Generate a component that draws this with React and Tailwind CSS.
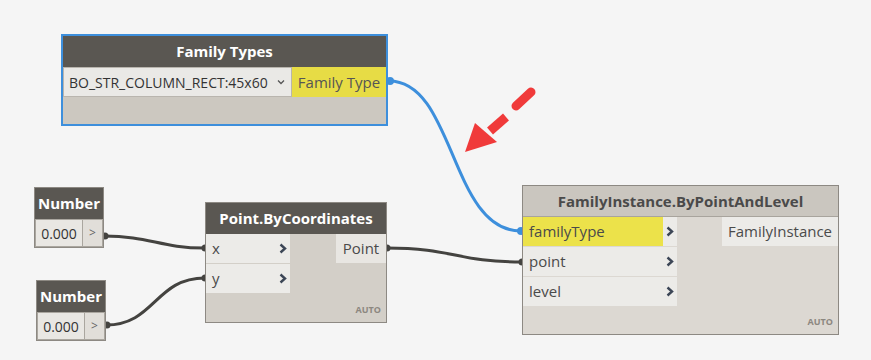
import React from "react";

const font = { fontFamily: '"Open Sans", "Noto Sans", sans-serif' };

function Chevron({ className = "" }) {
  return (
    <svg width="8" height="11" viewBox="0 0 8 11" className={className}>
      <path d="M1.5 1.5 L6 5.5 L1.5 9.5" fill="none" stroke="#3c4656" strokeWidth="2.4" strokeLinejoin="miter" />
    </svg>
  );
}

function InRow({ label, yellow }) {
  return (
    <div className="flex h-[29px] items-stretch bg-[#ecebe8]">
      <div className={`flex flex-1 items-center pl-[6px] text-[15px] text-[#4a4a4a] ${yellow ? "bg-[#ece24a]" : ""}`}>{label}</div>
      <div className="flex w-[14px] items-center justify-center">
        <Chevron />
      </div>
    </div>
  );
}

export default function App() {
  return (
    <div className="relative h-[360px] w-[871px] overflow-hidden bg-[#f5f5f5]" style={font}>
      {/* wires */}
      <svg className="absolute left-0 top-0" width="871" height="360">
        <path d="M389 81 C 455 81, 450 231, 521 231" fill="none" stroke="#3d8fdc" strokeWidth="3" />
        <path d="M104 236 C 150 236, 160 248, 205 248" fill="none" stroke="#444340" strokeWidth="3" />
        <path d="M106 325 C 155 325, 155 278, 205 278" fill="none" stroke="#444340" strokeWidth="3" />
        <path d="M386 248 C 455 248, 455 262, 522 262" fill="none" stroke="#444340" strokeWidth="3" />
        {/* port nubs */}
        <circle cx="390" cy="81" r="4" fill="#3d8fdc" />
        <circle cx="521" cy="231" r="4" fill="#3d8fdc" />
        <circle cx="105" cy="236" r="3.5" fill="#444340" />
        <circle cx="107" cy="325" r="3.5" fill="#444340" />
        <circle cx="205" cy="248" r="3.5" fill="#444340" />
        <circle cx="205" cy="278" r="3.5" fill="#444340" />
        <circle cx="387" cy="248" r="3.5" fill="#444340" />
        <circle cx="522" cy="262" r="3.5" fill="#444340" />
        {/* red dashed arrow */}
        <g filter="">
          <line x1="531" y1="92" x2="516" y2="106" stroke="#f03a3a" strokeWidth="9" strokeLinecap="round" />
          <line x1="506" y1="117" x2="490" y2="131" stroke="#f03a3a" strokeWidth="9" />
          <polygon points="465,152 475,123 497,142" fill="#f03a3a" />
        </g>
      </svg>

      {/* Family Types node */}
      <div className="absolute left-[61px] top-[34px] flex h-[92px] w-[327px] flex-col border-2 border-[#3d8fdc] bg-[#ccc8c0]">
        <div className="flex h-[31px] items-center justify-center bg-[#5a5752] text-[15px] font-bold text-white">Family Types</div>
        <div className="flex h-[30px]">
          <div className="flex w-[229px] items-center justify-between border border-[#b9b5ae] bg-[#eae9e6] pl-[5px] pr-[6px] text-[14px] text-[#333]">
            <span>BO_STR_COLUMN_RECT:45x60</span>
            <svg width="8" height="6" viewBox="0 0 8 6">
              <path d="M1 1.5 L4 4.5 L7 1.5" fill="none" stroke="#555" strokeWidth="1.3" />
            </svg>
          </div>
          <div className="flex flex-1 items-center justify-center bg-[#e7dc45] text-[15px] text-[#555]">Family Type</div>
        </div>
        <div className="flex-1" />
      </div>

      {/* Number 1 */}
      <div className="absolute left-[34px] top-[187px] flex h-[61px] w-[70px] flex-col border border-[#8d8983] bg-[#cfcbc4]">
        <div className="flex h-[31px] items-center justify-center bg-[#5a5752] text-[15px] font-bold text-white">Number</div>
        <div className="flex flex-1">
          <div className="flex w-[48px] items-center justify-center border border-[#aaa69f] bg-[#e9e7e3] text-[14px] text-[#333]">0.000</div>
          <div className="flex flex-1 items-center justify-center border-y border-r border-[#aaa69f] bg-[#e1ded9] text-[12px] text-[#666]">&gt;</div>
        </div>
      </div>

      {/* Number 2 */}
      <div className="absolute left-[36px] top-[280px] flex h-[61px] w-[70px] flex-col border border-[#8d8983] bg-[#cfcbc4]">
        <div className="flex h-[31px] items-center justify-center bg-[#5a5752] text-[15px] font-bold text-white">Number</div>
        <div className="flex flex-1">
          <div className="flex w-[48px] items-center justify-center border border-[#aaa69f] bg-[#e9e7e3] text-[14px] text-[#333]">0.000</div>
          <div className="flex flex-1 items-center justify-center border-y border-r border-[#aaa69f] bg-[#e1ded9] text-[12px] text-[#666]">&gt;</div>
        </div>
      </div>

      {/* Point.ByCoordinates */}
      <div className="absolute left-[205px] top-[202px] flex h-[121px] w-[182px] flex-col border border-[#8d8983] bg-[#d3cfc8]">
        <div className="flex h-[31px] items-center justify-center bg-[#5a5752] text-[15px] font-bold text-white">Point.ByCoordinates</div>
        <div className="flex flex-1">
          <div className="flex w-[84px] flex-col gap-[1px]">
            <InRow label="x" />
            <InRow label="y" />
          </div>
          <div className="flex flex-1 flex-col items-end">
            <div className="flex h-[29px] w-[50px] items-center justify-center bg-[#e8e6e2] text-[15px] text-[#4a4a4a]">Point</div>
            <div className="flex-1" />
            <div className="pb-[6px] pr-[5px] text-[9px] font-bold text-[#8c8780]">AUTO</div>
          </div>
        </div>
      </div>

      {/* FamilyInstance.ByPointAndLevel */}
      <div className="absolute left-[522px] top-[185px] flex h-[150px] w-[317px] flex-col border border-[#8d8983] bg-[#dcd8d2]">
        <div className="flex h-[31px] items-center justify-center border-b border-[#a8a49d] bg-[#cac6bf] text-[15px] font-bold text-[#4a4a4a]">FamilyInstance.ByPointAndLevel</div>
        <div className="flex flex-1">
          <div className="flex w-[154px] flex-col gap-[1px]">
            <InRow label="familyType" yellow />
            <InRow label="point" />
            <InRow label="level" />
          </div>
          <div className="flex flex-1 flex-col items-end">
            <div className="flex h-[29px] w-[116px] items-center justify-center bg-[#ecebe8] text-[15px] text-[#4a4a4a]">FamilyInstance</div>
            <div className="flex-1" />
            <div className="pb-[6px] pr-[5px] text-[9px] font-bold text-[#8c8780]">AUTO</div>
          </div>
        </div>
      </div>
    </div>
  );
}
